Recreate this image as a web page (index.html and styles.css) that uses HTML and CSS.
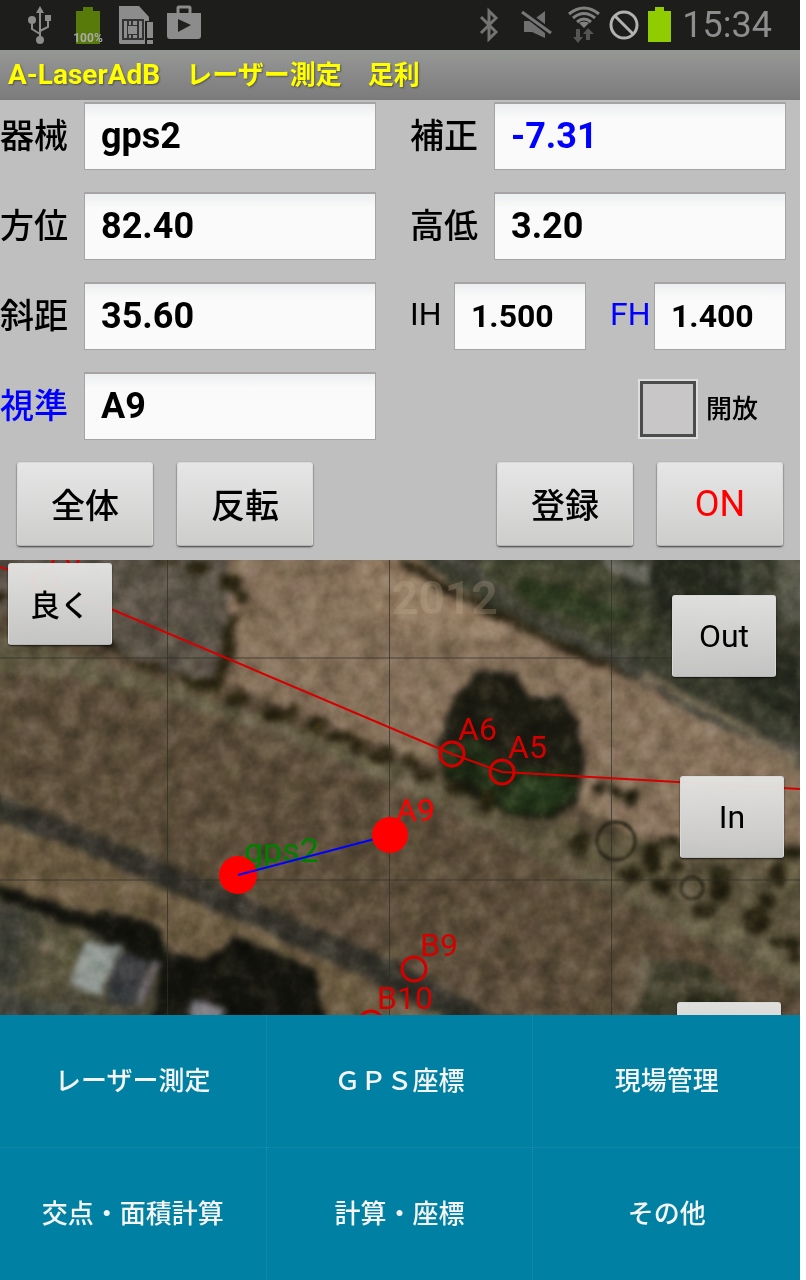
FILE: index.html
```html
<!DOCTYPE html>
<html lang="ja">
<head>
  <meta charset="UTF-8" />
  <meta name="viewport" content="width=device-width, initial-scale=1.0" />
  <title>A-LaserAdB レーザー測定 足利</title>
  <link rel="stylesheet" href="styles.css">
</head>
<body>
  <header class="statusbar">
    <div class="status-icons">
      <svg class="icon" viewBox="0 0 48 50" fill="none" stroke="#8c8c8c" stroke-width="2">
        <path d="M24 12V40M24 34L16 29V22M24 31L32 27V20"/>
        <path d="M24 6l4 7h-8zM29 15h6v6h-6z" fill="#8c8c8c" stroke="none"/>
        <circle cx="16" cy="20" r="4" fill="#8c8c8c" stroke="none"/>
        <circle cx="24" cy="40" r="4" fill="#8c8c8c" stroke="none"/>
      </svg>
      <svg class="icon" viewBox="0 0 48 50">
        <path d="M12 11h7V7h10v4h7v33H12z" fill="#587a0a"/>
        <text class="battery-text" x="24" y="42" text-anchor="middle">100%</text>
      </svg>
      <svg class="icon" viewBox="0 0 48 50">
        <path d="M7 6h20l10 11v4h-4v23H8l-1-1z" fill="#8c8c8c"/>
        <path d="M10 19h22v21H10z" fill="#333"/>
        <path d="M12 21h3v17h-3zM27 21h3v17h-3zM17 21h2v4h-2zM21 21h4v4h-4zM16 26h9v8h-9zM17 35h2v3h-2zM21 35h4v3h-4z" fill="#8c8c8c"/>
        <path d="M35 22h6v16h-6zM35 40h6v4h-6z" fill="#8c8c8c"/>
      </svg>
      <svg class="icon" viewBox="0 0 48 50">
        <path d="M18 14V8q0-1 1-1h10q1 0 1 1v6" fill="none" stroke="#8c8c8c" stroke-width="3"/>
        <path d="M7 13h34v23q0 3-3 3H10q-3 0-3-3z" fill="#8c8c8c"/>
        <path d="M18 19v13l13-7z" fill="#20201d"/>
      </svg>
    </div>
    <div class="status-icons">
      <svg class="icon" viewBox="0 0 48 50" fill="none" stroke="#737373" stroke-width="3">
        <path d="M17 17l15 15-7 7V11l7 7-15 15"/>
      </svg>
      <svg class="icon" viewBox="0 0 48 50">
        <path d="M12 21h8l13-10v27L20 32h-8z" fill="#707070"/>
        <path d="M9 10l31 24" stroke="#1d1d1b" stroke-width="7"/>
        <path d="M10 12l29 21" stroke="#777" stroke-width="3"/>
      </svg>
      <svg class="icon" viewBox="0 0 48 50" fill="none" stroke="#808080" stroke-width="3">
        <path d="M9 14q15-12 30 0M13 18q11-9 22 0M17 22q7-6 14 0"/>
        <path d="M24 28l-5-5q5-3 10 0z" fill="#808080" stroke="none"/>
        <path d="M16 29h4v8h3l-5 6-5-6h3zM26 40V34h-3l5-6 6 6h-4v6z" fill="#555" stroke="none"/>
      </svg>
      <svg class="icon icon-narrow" viewBox="0 0 32 50" fill="none" stroke="#b2b2b2" stroke-width="3">
        <circle cx="16" cy="25" r="13"/>
        <path d="M7 16l18 18"/>
      </svg>
      <svg class="icon icon-battery" viewBox="0 0 40 50">
        <path d="M8 11h7V7h9v4h7v31H8z" fill="#90cc00"/>
      </svg>
      <time class="clock">15:34</time>
    </div>
  </header>

  <h1 class="titlebar"><span class="app-name">A-LaserAdB</span>　レーザー測定　足利</h1>

  <form class="panel">
    <label for="machine">器械</label>
    <input type="text" id="machine" value="gps2">
    <label for="correction" class="right-label">補正</label>
    <input type="text" id="correction" class="blue" value="-7.31">

    <label for="azimuth">方位</label>
    <input type="text" id="azimuth" value="82.40">
    <label for="elevation" class="right-label">高低</label>
    <input type="text" id="elevation" value="3.20">

    <label for="distance">斜距</label>
    <input type="text" id="distance" value="35.60">
    <div class="heights">
      <label for="ih">IH</label>
      <input type="text" id="ih" value="1.500">
      <label for="fh" class="blue fh-label">FH</label>
      <input type="text" id="fh" value="1.400">
    </div>

    <label for="target" class="blue">視準</label>
    <input type="text" id="target" value="A9">
    <div class="release">
      <input type="checkbox" id="release">
      <label for="release">開放</label>
    </div>

    <div class="actions">
      <button type="button">全体</button>
      <button type="button">反転</button>
      <button type="button" class="push">登録</button>
      <button type="button" class="toggle">ON</button>
    </div>
  </form>

  <main class="map">
    <svg class="map-view" viewBox="0 0 800 455" preserveAspectRatio="xMidYMid slice">
      <defs>
        <filter id="soft" x="-5%" y="-5%" width="110%" height="110%" color-interpolation-filters="sRGB">
          <feTurbulence type="fractalNoise" baseFrequency="0.06" numOctaves="2" seed="4" result="n"/>
          <feDisplacementMap in="SourceGraphic" in2="n" scale="10" xChannelSelector="R" yChannelSelector="G"/>
          <feGaussianBlur stdDeviation="3"/>
        </filter>
        <filter id="grain" x="0" y="0" width="100%" height="100%" color-interpolation-filters="sRGB">
          <feTurbulence type="fractalNoise" baseFrequency="0.05" numOctaves="4" seed="9"/>
          <feColorMatrix values="1 0 0 0 0  0.9 0.1 0 0 0  0.9 0 0.1 0 0  0 0 0 0 1"/>
        </filter>
      </defs>

      <!-- aerial photo -->
      <rect width="800" height="455" fill="#5c4e3b"/>
      <g filter="url(#soft)">
        <!-- fields -->
        <path d="M-20-20H260L215 125 150 105-20 45z" fill="#5a5246"/>
        <path d="M225-20H400L520 70 640 110 720 160 820 215V400L590 250 430 205 215 118 230 60z" fill="#85705a"/>
        <path d="M400-20L450 20 520 60 500 80 400 70 340 20z" fill="#927b62"/>
        <path d="M0 80L150 105 300 160 440 225 600 300 820 420V475H560L400 380 200 300 0 230z" fill="#5b4d39"/>
        <path d="M-20 70L90 95 240 150 420 210 600 300 820 400V440L600 330 400 228 280 178 130 128-20 110z" fill="#625a43"/>
        <path d="M240 155L420 228 600 315 820 425" stroke="#6b624a" stroke-width="7" fill="none"/>
        <path d="M430 230L500 230 590 270 700 285 820 300V400L680 350 540 290z" fill="#5d543d"/>
        <!-- upper right road and scrub -->
        <path d="M390-20L450 22 520 65 600 100 700 150 820 215V-20z" fill="#3b3d2e"/>
        <path d="M400 0L470 42 560 85 640 120" stroke="#302817" stroke-width="9" fill="none"/>
        <path d="M440-10L560 65 700 150 820 205" stroke="#45443a" stroke-width="15" fill="none"/>
        <path d="M470 0H610L660 80 600 85 520 45z" fill="#41432f"/>
        <path d="M510 20L575 30 635 55 600 65 535 48z" fill="#2e3a20"/>
        <path d="M600-5L660 8 650 25 610 10z" fill="#64645a"/>
        <path d="M650-10H738L740 70 800 100V170L720 110 650 50z" fill="#26291e"/>
        <path d="M745-10L748 40" stroke="#535747" stroke-width="9"/>
        <path d="M775-10H820V75L780 50z" fill="#5a5a4c"/>
        <path d="M640 115L740 165 820 220" stroke="#766b55" stroke-width="9" fill="none"/>
        <!-- bushes in the upper left -->
        <g fill="#2c2512">
          <ellipse cx="167" cy="0" rx="12" ry="4"/><ellipse cx="199" cy="9" rx="13" ry="7"/>
          <ellipse cx="229" cy="22" rx="12" ry="9"/><ellipse cx="241" cy="35" rx="8" ry="8"/>
          <path d="M227 55h9l-2 40-14 36-8-6 9-34z"/>
          <ellipse cx="110" cy="87" rx="10" ry="4"/><ellipse cx="151" cy="105" rx="12" ry="5"/>
          <path d="M178 115l36 6 10 12-40-8z"/>
          <ellipse cx="239" cy="138" rx="12" ry="8"/><ellipse cx="280" cy="156" rx="19" ry="8"/>
          <ellipse cx="292" cy="152" rx="8" ry="9"/><ellipse cx="318" cy="166" rx="9" ry="10"/>
          <ellipse cx="340" cy="176" rx="15" ry="6"/><ellipse cx="361" cy="186" rx="12" ry="8"/>
          <ellipse cx="380" cy="198" rx="12" ry="6"/><ellipse cx="387" cy="191" rx="7" ry="7"/>
          <ellipse cx="411" cy="203" rx="8" ry="9"/><ellipse cx="423" cy="216" rx="12" ry="6"/>
          <ellipse cx="0" cy="38" rx="6" ry="7"/>
        </g>
        <!-- large tree -->
        <path d="M445 165L455 135 478 112 515 112 530 138 560 136 577 160 585 205 577 245 545 262 515 258 480 240 448 230 438 190z" fill="#1e1d13"/>
        <path d="M442 185L480 178 505 205 575 210 575 240 545 256 512 254 470 225 443 212z" fill="#1f2b15"/>
        <path d="M520 215L565 218 560 245 535 254 505 245z" fill="#24361a"/>
        <!-- bushes on the right -->
        <g fill="#262211">
          <ellipse cx="455" cy="229" rx="12" ry="7"/><ellipse cx="486" cy="242" rx="8" ry="12"/>
          <ellipse cx="580" cy="284" rx="11" ry="13"/><ellipse cx="600" cy="228" rx="6" ry="6"/>
          <ellipse cx="617" cy="233" rx="8" ry="6"/><ellipse cx="632" cy="238" rx="8" ry="9"/>
          <ellipse cx="633" cy="314" rx="14" ry="7"/><ellipse cx="652" cy="298" rx="10" ry="15"/>
          <ellipse cx="668" cy="281" rx="12" ry="5"/><ellipse cx="676" cy="307" rx="7" ry="6"/>
          <ellipse cx="663" cy="326" rx="13" ry="8"/><ellipse cx="720" cy="323" rx="10" ry="19"/>
          <ellipse cx="707" cy="350" rx="14" ry="8"/><ellipse cx="755" cy="361" rx="14" ry="15"/>
          <ellipse cx="766" cy="341" rx="8" ry="8"/><ellipse cx="778" cy="315" rx="8" ry="12"/>
          <ellipse cx="790" cy="292" rx="14" ry="7"/><ellipse cx="786" cy="383" rx="18" ry="7"/>
          <ellipse cx="795" cy="396" rx="7" ry="7"/>
        </g>
        <path d="M650 400L690 400 735 430 760 475H632z" fill="#42402e"/>
        <path d="M648 395L622 470" stroke="#6e634f" stroke-width="10"/>
        <path d="M685 425l40 12-10 25h-28z" fill="#29291a"/>
        <!-- farm road and verge -->
        <path d="M-20 255L140 310 280 368 400 420 500 475H310L210 400 100 365-20 325z" fill="#6b5b42"/>
        <path d="M-20 228L100 275 200 318 300 362 410 408 530 475 475 475 380 425 280 378 170 332 80 290-20 255z" fill="#34322a"/>
        <path d="M-20 226L120 273 280 342" stroke="#61563f" stroke-width="4" fill="none"/>
        <!-- houses and shadows in the lower left -->
        <path d="M-20 325L80 360 160 385 225 415 320 475H-20z" fill="#4b4838"/>
        <path d="M-10 320L70 350 105 352 160 365 165 388 205 400 235 374 270 392 315 410 330 475H150L160 410 95 375-10 336z" fill="#14140e"/>
        <path d="M0 345L28 355 22 400 12 430-10 420z" fill="#3f4036"/>
        <path d="M45 360L88 370 70 432 30 440z" fill="#5b563f"/>
        <path d="M84 383L120 386 115 402 100 436 72 424z" fill="#949b96"/>
        <path d="M120 392L150 400 132 448 104 440z" fill="#36383a"/>
        <path d="M157 402L137 446" stroke="#777078" stroke-width="6"/>
        <path d="M192 440l32 8-4 14-30-4z" fill="#88868b"/>
        <circle cx="43" cy="390" r="5" fill="#8a7565"/>
        <path d="M-10 430L80 448 130 470H-10z" fill="#46463d"/>
      </g>
      <g class="rings">
        <circle cx="616" cy="281" r="19"/>
        <circle cx="692" cy="328" r="11"/>
      </g>
      <rect class="grain" width="800" height="455" filter="url(#grain)"/>
      <text class="photo-mark" x="392" y="54">2012</text>

      <!-- grid -->
      <path class="grid-line" d="M167.5 0V455M389.5 0V455M611.5 0V455M0 98H800M0 320H800"/>

      <!-- survey lines and points -->
      <g class="survey">
        <path d="M0 7L45 21 452 194 502 212 800 229"/>
        <circle cx="45" cy="21" r="12"/>
        <circle cx="452" cy="194" r="12"/>
        <circle cx="502" cy="212" r="12"/>
        <circle cx="414" cy="409" r="12"/>
        <circle cx="371" cy="463" r="12"/>
      </g>
      <g class="point-name">
        <text x="50" y="4">A7</text>
        <text x="458" y="180">A6</text>
        <text x="508" y="198">A5</text>
        <text x="420" y="396">B9</text>
        <text x="377" y="449">B10</text>
        <text x="396" y="261" class="target">A9</text>
        <text x="244" y="302" class="base">gps2</text>
      </g>
      <circle cx="238" cy="315" r="19" fill="#f00"/>
      <path d="M238 315L390 275" stroke="#00f" stroke-width="2"/>
      <circle cx="390" cy="275" r="18" fill="#f00"/>
    </svg>
    <button type="button" class="map-button quality">良く</button>
    <button type="button" class="map-button zoom-out">Out</button>
    <button type="button" class="map-button zoom-in">In</button>
    <button type="button" class="map-button locate" aria-label="現在地"></button>
  </main>

  <nav class="menu">
    <a href="#laser">レーザー測定</a>
    <a href="#gps">ＧＰＳ座標</a>
    <a href="#site">現場管理</a>
    <a href="#area">交点・面積計算</a>
    <a href="#calc">計算・座標</a>
    <a href="#other">その他</a>
  </nav>
</body>
</html>
```
FILE: styles.css
```css
* {
  box-sizing: border-box;
}

body {
  margin: 0;
  padding-right: 6px;
  min-height: 100vh;
  display: flex;
  flex-direction: column;
  background: #fff;
  color: #000;
  font-family: Roboto, "Noto Sans CJK JP", sans-serif;
}

button, input {
  font-family: inherit;
}

.blue, input.blue {
  color: #00f;
}

/* status bar */
.statusbar {
  display: flex;
  justify-content: space-between;
  height: 50px;
  padding: 0 28px 0 16px;
  background: #1d1d1b;
}

.status-icons {
  display: flex;
  align-items: center;
}

.icon {
  width: 48px;
  height: 50px;
}

.icon-narrow {
  width: 32px;
}

.icon-battery {
  width: 40px;
}

.battery-text {
  font-size: 12px;
  font-weight: bold;
  fill: #aaa;
}

.clock {
  margin-left: 2px;
  font-size: 36px;
  line-height: 50px;
  color: #8e8e8e;
}

.titlebar {
  margin: 0;
  padding: 0 8px;
  height: 50px;
  line-height: 50px;
  font-size: 26px;
  font-weight: bold;
  color: #ff0;
  text-shadow: 1px 1px 2px rgba(0, 0, 0, 0.4);
  background: linear-gradient(#969896, #7b7b7b);
}

.app-name {
  font-size: 28px;
}

/* input panel */
.panel {
  display: grid;
  grid-template-columns: 84px 1fr 118px 1fr;
  row-gap: 22px;
  align-items: center;
  padding: 2px 14px 14px 0;
  background: #bfbfbf;
}

.panel label {
  font-size: 34px;
  font-weight: 500;
  line-height: 40px;
  white-space: nowrap;
}

.panel .right-label {
  padding-left: 34px;
}

.panel input[type="text"] {
  width: 100%;
  min-width: 0;
  height: 68px;
  padding: 0 16px 2px;
  border: 1px solid #a5a3a3;
  border-top-width: 2px;
  border-radius: 0;
  background: linear-gradient(#eceeef, #fafafa 14px);
  font-size: 36px;
  font-weight: bold;
}

.heights {
  grid-column: 3 / 5;
  display: grid;
  grid-template-columns: 44px 1fr 68px 1fr;
  align-items: center;
  padding-left: 34px;
}

.panel .heights label {
  font-size: 32px;
  font-weight: normal;
  padding-bottom: 4px;
}

.panel .heights input {
  font-size: 32px;
}

.panel .fh-label {
  padding-left: 24px;
}

.release {
  grid-column: 3 / 5;
  display: flex;
  align-items: center;
  justify-content: flex-end;
  gap: 10px;
  padding: 6px 28px 0 0;
}

.release input {
  appearance: none;
  width: 56px;
  height: 56px;
  margin: 0;
  border: 3px solid #4c4c4e;
  background: #c8c6c6;
  box-shadow: 0 0 0 2px #dededc;
}

.panel .release label {
  font-size: 26px;
}

.actions {
  grid-column: 1 / 5;
  display: flex;
  gap: 24px;
  padding: 0 3px 0 17px;
}

button {
  border: 1px solid #d9d9d9;
  border-bottom-color: #b5b5b5;
  border-radius: 3px;
  background: linear-gradient(#e6e6e6, #cdcdcc);
  box-shadow: 0 1px 2px rgba(0, 0, 0, 0.7);
  color: #000;
  padding: 0;
}

.actions button {
  width: 136px;
  height: 84px;
  padding-bottom: 2px;
  font-size: 34px;
  font-weight: 500;
}

.actions .push {
  margin-left: auto;
}

.actions .toggle {
  width: 126px;
  padding: 0;
  font-size: 36px;
  font-weight: normal;
  color: #f00;
}

/* map */
.map {
  flex: 1;
  min-height: 455px;
  position: relative;
  overflow: hidden;
}

.map-view {
  position: absolute;
  inset: 0;
  width: 100%;
  height: 100%;
}

.rings {
  fill: none;
  stroke: #2e291c;
  stroke-width: 4;
  opacity: 0.8;
  filter: blur(1px);
}

.grain {
  mix-blend-mode: soft-light;
  opacity: 0.55;
}

.photo-mark {
  font-size: 46px;
  font-weight: bold;
  fill: #c8b496;
  opacity: 0.25;
}

.grid-line {
  stroke: #2d2f29;
  stroke-opacity: 0.7;
  stroke-width: 1;
}

.survey {
  fill: none;
  stroke: #d40000;
  stroke-width: 2;
}

.survey circle {
  stroke-width: 3;
}

.point-name {
  font-size: 32px;
  fill: #d40000;
}

.point-name .target {
  fill: #f00;
}

.point-name .base {
  font-size: 34px;
  fill: #008000;
}

.map-button {
  position: absolute;
  width: 104px;
  height: 82px;
  font-size: 32px;
  background: linear-gradient(rgba(228, 228, 226, 0.97), rgba(200, 200, 200, 0.97));
}

.quality {
  left: 8px;
  top: 3px;
  padding-bottom: 2px;
  font-size: 30px;
  font-weight: 500;
}

.zoom-out {
  right: 24px;
  top: 35px;
}

.zoom-in {
  right: 16px;
  top: 216px;
}

.locate {
  right: 19px;
  top: 442px;
}

/* bottom menu */
.menu {
  display: grid;
  grid-template-columns: repeat(3, 1fr);
  background: #0080a2;
}

.menu a {
  padding: 46px 0;
  line-height: 40px;
  font-size: 26px;
  font-weight: 500;
  text-align: center;
  text-decoration: none;
  color: #f4f4f4;
  border-right: 1px dotted #1a8dac;
}

.menu a:nth-child(3n) {
  border-right: none;
}

.menu a:nth-child(-n+3) {
  border-bottom: 1px dotted #1a8dac;
}
```
